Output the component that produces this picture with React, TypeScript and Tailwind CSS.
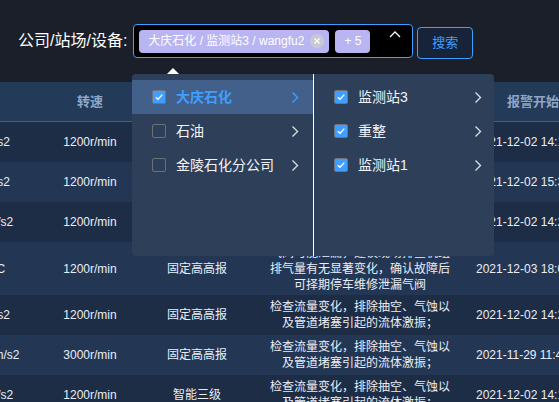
import { Fragment } from 'react'

const FONT = "font-['Liberation_Sans','Noto_Sans_CJK_SC',sans-serif]"

const COMPANIES = [
  { name: '大庆石化', checked: true, active: true },
  { name: '石油', checked: false, active: false },
  { name: '金陵石化分公司', checked: false, active: false },
]

const STATIONS = [
  { name: '监测站3', checked: true },
  { name: '重整', checked: true },
  { name: '监测站1', checked: true },
]

const ADVICE = '检查流量变化，排除抽空、气蚀以及管道堵塞引起的流体激振；'

const ROWS = [
  { value: '0.8mm/s2', speed: '1200r/min', type: '固定高高报', advice: ADVICE, time: '2021-12-02 14:16:32', tall: false },
  { value: '0.9mm/s2', speed: '1200r/min', type: '固定高高报', advice: ADVICE, time: '2021-12-02 15:32:08', tall: false },
  { value: '1.25mm/s2', speed: '1200r/min', type: '固定高高报', advice: ADVICE, time: '2021-12-02 14:25:47', tall: false },
  {
    value: '145.6°C',
    speed: '1200r/min',
    type: '固定高高报',
    advice: '气阀可能泄漏，建议现场排查机组排气量有无显著变化，确认故障后可择期停车维修泄漏气阀',
    time: '2021-12-03 18:06:21',
    tall: true,
  },
  { value: '0.7mm/s2', speed: '1200r/min', type: '固定高高报', advice: ADVICE, time: '2021-12-02 14:25:47', tall: false },
  { value: '112.36mm/s2', speed: '3000r/min', type: '固定高高报', advice: ADVICE, time: '2021-11-29 11:43:12', tall: false },
  { value: '2.08mm/s2', speed: '1200r/min', type: '智能三级', advice: ADVICE, time: '2021-12-02 14:16:32', tall: false },
]

function Checkbox({ checked }: { checked: boolean }) {
  return (
    <span
      className={`flex h-[14px] w-[14px] shrink-0 items-center justify-center rounded-[2px] border ${
        checked ? 'border-[#6d7480] bg-[#409eff]' : 'border-[#6b7079] bg-transparent'
      }`}
    >
      {checked && (
        <svg width="10" height="10" viewBox="0 0 10 10" fill="none">
          <path d="M1.8 5.2 L4 7.3 L8.3 2.6" stroke="#fff" strokeWidth="1.3" />
        </svg>
      )}
    </span>
  )
}

function Chevron({ color }: { color: string }) {
  return (
    <svg width="8" height="13" viewBox="0 0 8 13" fill="none" className="shrink-0">
      <path d="M1.5 1.5 L6.5 6.5 L1.5 11.5" stroke={color} strokeWidth="1.4" />
    </svg>
  )
}

export default function App() {
  return (
    <div className={`relative h-[402px] w-[559px] overflow-hidden bg-[#1b1f29] ${FONT}`}>
      {/* filter bar */}
      <div className="flex h-[82px] items-center pl-[18px]">
        <span className="text-[16px] text-white">公司/站场/设备:</span>
        <div className="ml-[6px] flex h-[34px] w-[280px] items-center rounded-[4px] border border-[#409eff] bg-black pl-[5px] pr-[11px]">
          <span className="flex h-[23px] items-center rounded-[4px] bg-[#b9b5f3] pl-[9px] pr-[5px] text-[12px] text-white">
            大庆石化 / 监测站3 / wangfu2
            <span className="ml-[6px] flex h-[14px] w-[14px] items-center justify-center rounded-full bg-[#c9c8d6]">
              <svg width="8" height="8" viewBox="0 0 8 8">
                <path d="M1.5 1.5 L6.5 6.5 M6.5 1.5 L1.5 6.5" stroke="#fff" strokeWidth="1.2" />
              </svg>
            </span>
          </span>
          <span className="ml-[6px] flex h-[23px] items-center rounded-[4px] bg-[#b9b5f3] px-[9px] text-[12px] text-white">
            + 5
          </span>
          <svg width="12" height="7" viewBox="0 0 12 7" fill="none" className="mb-[13px] ml-auto">
            <path d="M1 6 L6 1 L11 6" stroke="#fff" strokeWidth="1.3" />
          </svg>
        </div>
        <button className="ml-[4px] mt-[3px] flex h-[32px] w-[56px] items-center justify-center rounded-[4px] border border-[#409eff] bg-[#162339] text-[13px] text-[#409eff]">
          搜索
        </button>
      </div>

      {/* table, scrolled horizontally */}
      <div className="overflow-hidden">
        <div className="-ml-[70px] w-[691px]">
          <div className="grid h-[40px] grid-cols-[107px_106px_108px_218px_152px] items-center border-b border-[#1d6f9e] bg-[#233a58] text-[13px] font-bold text-[#8ea6c6]">
            <span className="pr-[6px] text-center">报警值</span>
            <span className="text-center">转速</span>
            <span className="text-center">报警类型</span>
            <span className="text-center">处理建议</span>
            <span className="pl-[38px]">报警开始时间</span>
          </div>
          {ROWS.map((row, i) => (
            <div
              key={i}
              className={`grid grid-cols-[107px_106px_108px_218px_152px] items-center text-[12px] leading-[16px] text-[#e9eef5] ${
                row.tall ? 'h-[53px]' : 'h-[40px]'
              } ${i % 2 === 0 ? 'bg-[#1e2d46]' : 'bg-[#233755]'}`}
            >
              <span className="text-center">{row.value}</span>
              <span className="text-center">{row.speed}</span>
              <span className="text-center">{row.type}</span>
              <span className="px-[17px] text-center">{row.advice}</span>
              <span className="whitespace-nowrap pl-[7px]">{row.time}</span>
            </div>
          ))}
        </div>
      </div>

      {/* cascader dropdown */}
      <div className="absolute left-[132px] top-[68px]">
        <div className="ml-[35px] h-0 w-0 border-x-[6px] border-b-[6px] border-x-transparent border-b-white" />
        <div className="flex h-[182px] rounded-[4px] bg-[#2d3f59]">
          <div className="w-[182px] border-r border-white pt-[6px]">
            {COMPANIES.map((c) => (
              <div
                key={c.name}
                className={`flex h-[34px] items-center pl-[20px] pr-[14px] ${c.active ? 'bg-[#42608a]' : ''}`}
              >
                <Checkbox checked={c.checked} />
                <span
                  className={`ml-[10px] flex-1 text-[14px] ${
                    c.active ? 'font-bold text-[#409eff]' : 'text-[#f2f4f7]'
                  }`}
                >
                  {c.name}
                </span>
                <Chevron color={c.active ? '#409eff' : '#d6dce4'} />
              </div>
            ))}
          </div>
          <div className="w-[180px] pt-[6px]">
            {STATIONS.map((s) => (
              <Fragment key={s.name}>
                <div className="flex h-[34px] items-center pl-[20px] pr-[12px]">
                  <Checkbox checked={s.checked} />
                  <span className="ml-[10px] flex-1 text-[14px] text-[#f2f4f7]">{s.name}</span>
                  <Chevron color="#d6dce4" />
                </div>
              </Fragment>
            ))}
          </div>
        </div>
      </div>
    </div>
  )
}
